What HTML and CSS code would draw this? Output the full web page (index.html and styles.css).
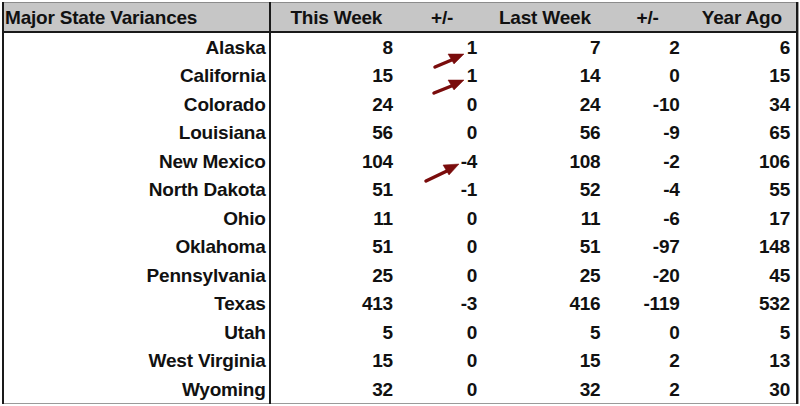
FILE: index.html
```html
<!DOCTYPE html>
<html>
<head>
<meta charset="utf-8">
<link rel="stylesheet" href="styles.css">
</head>
<body>
<div class="sheet">
  <table class="grid">
    <colgroup>
      <col class="c-name"><col class="c-tw"><col class="c-d1"><col class="c-lw"><col class="c-d2"><col class="c-ya">
    </colgroup>
    <thead>
      <tr>
        <th class="h-name">Major State Variances</th>
        <th>This Week</th>
        <th>+/-</th>
        <th>Last Week</th>
        <th>+/-</th>
        <th>Year Ago</th>
      </tr>
    </thead>
    <tbody>
      <tr><td class="name">Alaska</td><td class="tw">8</td><td class="d1">1</td><td class="lw">7</td><td class="d2">2</td><td class="ya">6</td></tr>
      <tr><td class="name">California</td><td class="tw">15</td><td class="d1">1</td><td class="lw">14</td><td class="d2">0</td><td class="ya">15</td></tr>
      <tr><td class="name">Colorado</td><td class="tw">24</td><td class="d1">0</td><td class="lw">24</td><td class="d2">-10</td><td class="ya">34</td></tr>
      <tr><td class="name">Louisiana</td><td class="tw">56</td><td class="d1">0</td><td class="lw">56</td><td class="d2">-9</td><td class="ya">65</td></tr>
      <tr><td class="name">New Mexico</td><td class="tw">104</td><td class="d1">-4</td><td class="lw">108</td><td class="d2">-2</td><td class="ya">106</td></tr>
      <tr><td class="name">North Dakota</td><td class="tw">51</td><td class="d1">-1</td><td class="lw">52</td><td class="d2">-4</td><td class="ya">55</td></tr>
      <tr><td class="name">Ohio</td><td class="tw">11</td><td class="d1">0</td><td class="lw">11</td><td class="d2">-6</td><td class="ya">17</td></tr>
      <tr><td class="name">Oklahoma</td><td class="tw">51</td><td class="d1">0</td><td class="lw">51</td><td class="d2">-97</td><td class="ya">148</td></tr>
      <tr><td class="name">Pennsylvania</td><td class="tw">25</td><td class="d1">0</td><td class="lw">25</td><td class="d2">-20</td><td class="ya">45</td></tr>
      <tr><td class="name">Texas</td><td class="tw">413</td><td class="d1">-3</td><td class="lw">416</td><td class="d2">-119</td><td class="ya">532</td></tr>
      <tr><td class="name">Utah</td><td class="tw">5</td><td class="d1">0</td><td class="lw">5</td><td class="d2">0</td><td class="ya">5</td></tr>
      <tr><td class="name">West Virginia</td><td class="tw">15</td><td class="d1">0</td><td class="lw">15</td><td class="d2">2</td><td class="ya">13</td></tr>
      <tr><td class="name">Wyoming</td><td class="tw">32</td><td class="d1">0</td><td class="lw">32</td><td class="d2">2</td><td class="ya">30</td></tr>
    </tbody>
  </table>
  <svg class="arrows" width="800" height="406" viewBox="0 0 800 406">
    <g fill="#7a0c0c" stroke="#7a0c0c">
      <line x1="435" y1="67" x2="454" y2="59" stroke-width="3.5" stroke-linecap="round"/>
      <polygon points="464,54 448,54 454,64" stroke-width="0.5"/>
      <line x1="434" y1="93" x2="454" y2="85" stroke-width="3.5" stroke-linecap="round"/>
      <polygon points="464,80 448,80 454,90" stroke-width="0.5"/>
      <line x1="426" y1="181" x2="449" y2="170" stroke-width="3.5" stroke-linecap="round"/>
      <polygon points="459,164 443,165 449,175" stroke-width="0.5"/>
    </g>
  </svg>
</div>
</body>
</html>
```
FILE: styles.css
```css
html, body {
  margin: 0;
  padding: 0;
  background: #ffffff;
}
.sheet {
  position: relative;
  width: 800px;
  height: 406px;
  overflow: hidden;
}
.grid {
  margin: 2px 0 0 2px;
  width: 796px;
  border-collapse: collapse;
  table-layout: fixed;
  font-family: "Liberation Sans", Arial, sans-serif;
  font-weight: bold;
  font-size: 19px;
  letter-spacing: -0.2px;
  color: #111;
  border-left: 2px solid #1a1a1a;
  border-right: 2px solid #1a1a1a;
  border-bottom: 1px solid #9a9a9a;
  box-shadow: 1px 0 0 #a0a0a0;
}
.c-name { width: 266px; }
.c-tw { width: 132px; }
.c-d1 { width: 80px; }
.c-lw { width: 125px; }
.c-d2 { width: 80px; }
.c-ya { width: 109px; }
thead th {
  background: #c6c6c6;
  height: 27px;
  padding: 1px 0 0 0;
  text-align: center;
  font-weight: bold;
  border-top: 1px solid #8c8c8c;
  border-bottom: 2px solid #1a1a1a;
  line-height: 26px;
}
thead th.h-name {
  text-align: left;
  padding-left: 1px;
  border-right: 2px solid #1a1a1a;
}
tbody td {
  height: 28.5px;
  padding: 2px 0 0 0;
  box-sizing: border-box;
  text-align: right;
  line-height: 26px;
}
td.name { padding-right: 3px; border-right: 2px solid #1a1a1a; }
td.tw { padding-right: 9px; }
td.d1 { padding-right: 5px; }
td.lw { padding-right: 7px; }
td.d2 { padding-right: 8px; }
td.ya { padding-right: 6px; }
.arrows {
  position: absolute;
  left: 0;
  top: 0;
  pointer-events: none;
}
```
